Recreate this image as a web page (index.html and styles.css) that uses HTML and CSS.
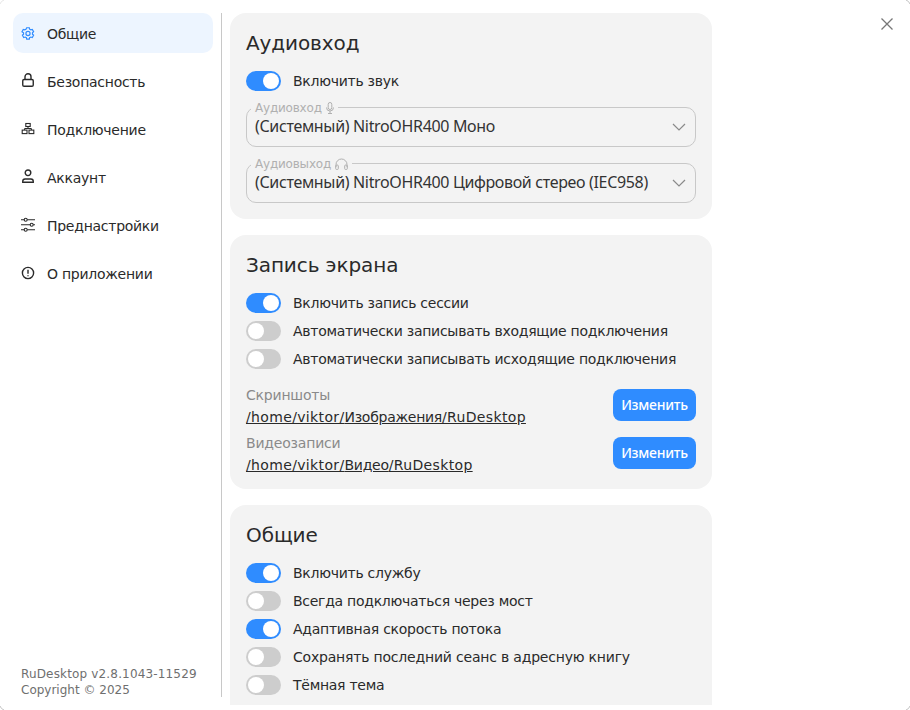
FILE: index.html
```html
<!DOCTYPE html>
<html lang="ru">
<head>
<meta charset="utf-8">
<title>RuDesktop</title>
<link rel="stylesheet" href="styles.css">
</head>
<body>
<div class="window">
  <aside class="sidebar">
    <nav class="nav">
      <a class="nav-item active">
        <svg class="nav-icon" viewBox="0 0 16 16"><g transform="translate(8 8.500) scale(.86) translate(-8 -8)"><path d="M6.500 1.300h3l.4 1.700 1.400.8 1.700-.5 1.500 2.600-1.300 1.200v1.700l1.300 1.200-1.500 2.600-1.700-.5-1.400.8-.4 1.700h-3l-.4-1.700-1.400-.8-1.700.5-1.500-2.600 1.300-1.200V7.100L1 5.900l1.500-2.600 1.700.5 1.400-.8z"/><circle cx="8" cy="8" r="2.400"/></g></svg>
        <span>Общие</span>
      </a>
      <a class="nav-item">
        <svg class="nav-icon" viewBox="0 0 16 16"><rect x="2.750" y="6.500" width="10.500" height="6.700" rx="1.300"/><path d="M5 6.500V3.750a3 3 0 0 1 6 0V6.500"/></svg>
        <span>Безопасность</span>
      </a>
      <a class="nav-item">
        <svg class="nav-icon thin" viewBox="0 0 16 16"><rect x="5.800" y="2.500" width="4.400" height="3"/><rect x="2.200" y="9.100" width="4.800" height="3.500"/><rect x="9" y="9.100" width="4.800" height="3.500"/><path d="M4.600 7.500h6.800M8 5.500v2M4.600 7.500v1.600M11.400 7.500v1.600"/></svg>
        <span>Подключение</span>
      </a>
      <a class="nav-item">
        <svg class="nav-icon" viewBox="0 0 16 16"><circle cx="8" cy="3.800" r="2.800"/><path d="M2.750 13.250v-1c0-1.300 1-2.300 2.300-2.300h5.900c1.300 0 2.300 1 2.300 2.300v1z"/></svg>
        <span>Аккаунт</span>
      </a>
      <a class="nav-item">
        <svg class="nav-icon thin" viewBox="0 0 16 16"><path d="M1 2.700h3.200M7.200 2.700H15M1 7.700h9.200M13.200 7.700H15M1 12.700h3.200M7.200 12.700H15"/><circle cx="5.700" cy="2.700" r="1.500"/><circle cx="11.700" cy="7.700" r="1.500"/><circle cx="5.700" cy="12.700" r="1.500"/></svg>
        <span>Преднастройки</span>
      </a>
      <a class="nav-item">
        <svg class="nav-icon" viewBox="0 0 16 16"><circle cx="8" cy="8" r="5.600"/><path d="M8 4.800v3.900M8 10.200v1"/></svg>
        <span>О приложении</span>
      </a>
    </nav>
    <div class="version">
      <div class="version-name">RuDesktop v2.8.1043-11529</div>
      <div>Copyright © 2025</div>
    </div>
  </aside>
  <main class="content">
    <section class="card">
      <h2 class="card-title">Аудиовход</h2>
      <div class="toggles">
        <label class="toggle-row"><span class="toggle on"></span><span>Включить звук</span></label>
      </div>
      <div class="field">
        <div class="legend"><span>Аудиовход</span>
          <svg class="legend-icon" viewBox="0 0 8 12"><rect x="2.200" y=".5" width="3.600" height="7" rx="1.800"/><path d="M.5 5.500a3.500 3.500 0 0 0 7 0M4 9v2.500M2 11.500h4"/></svg>
        </div>
        <div class="select-text">(Системный) NitroOHR400 Моно</div>
        <svg class="chevron" viewBox="0 0 14 8"><path d="M1 1l6 6 6-6"/></svg>
      </div>
      <div class="field">
        <div class="legend"><span>Аудиовыход</span>
          <svg class="legend-icon wide" viewBox="0 0 13 12"><path d="M1 9V6.500a5.500 5.500 0 0 1 11 0V9"/><rect x=".7" y="7" width="2.600" height="4.500" rx="1"/><rect x="9.700" y="7" width="2.600" height="4.500" rx="1"/></svg>
        </div>
        <div class="select-text">(Системный) NitroOHR400 Цифровой стерео (IEC958)</div>
        <svg class="chevron" viewBox="0 0 14 8"><path d="M1 1l6 6 6-6"/></svg>
      </div>
    </section>
    <section class="card paths-card">
      <h2 class="card-title">Запись экрана</h2>
      <div class="toggles">
        <label class="toggle-row"><span class="toggle on"></span><span>Включить запись сессии</span></label>
        <label class="toggle-row"><span class="toggle"></span><span>Автоматически записывать входящие подключения</span></label>
        <label class="toggle-row"><span class="toggle"></span><span>Автоматически записывать исходящие подключения</span></label>
      </div>
      <div class="paths">
        <div class="path-row">
          <div class="path-info"><div class="path-label">Скриншоты</div><a class="path-link">/home/viktor/<span class="cyr">Изображения</span>/RuDesktop</a></div>
          <button class="change-btn">Изменить</button>
        </div>
        <div class="path-row">
          <div class="path-info"><div class="path-label">Видеозаписи</div><a class="path-link">/home/viktor/<span class="cyr">Видео</span>/RuDesktop</a></div>
          <button class="change-btn">Изменить</button>
        </div>
      </div>
    </section>
    <section class="card last-card">
      <h2 class="card-title">Общие</h2>
      <div class="toggles">
        <label class="toggle-row"><span class="toggle on"></span><span>Включить службу</span></label>
        <label class="toggle-row"><span class="toggle"></span><span>Всегда подключаться через мост</span></label>
        <label class="toggle-row"><span class="toggle on"></span><span>Адаптивная скорость потока</span></label>
        <label class="toggle-row"><span class="toggle"></span><span class="wider">Сохранять последний сеанс в адресную книгу</span></label>
        <label class="toggle-row"><span class="toggle"></span><span>Тёмная тема</span></label>
      </div>
    </section>
  </main>
  <button class="close" aria-label="Закрыть">
    <svg viewBox="0 0 12 12"><path d="M.5.5l11 11M11.500.5l-11 11"/></svg>
  </button>
  <svg class="corner tl" viewBox="0 0 5 5"><path d="M0 4Q1 1 4 0"/></svg>
  <svg class="corner tr" viewBox="0 0 5 5"><path d="M1 0Q4 1 5 4"/></svg>
  <svg class="corner bl" viewBox="0 0 5 5"><path d="M0 1Q1 4 4 5"/></svg>
  <svg class="corner br" viewBox="0 0 5 5"><path d="M5 1Q4 4 1 5"/></svg>
</div>
</body>
</html>
```
FILE: styles.css
```css
* { box-sizing: border-box; }
html, body { margin: 0; height: 100%; overflow: hidden; background: #fff; }
body { font-family: "DejaVu Sans", sans-serif; font-size: 14px; color: #2a2a2a; }
.window { position: relative; display: flex; align-items: flex-start; width: 910px; height: 710px; background: #fff; overflow: hidden; }
.sidebar { width: 222px; height: 684px; flex: none; margin: 13px 0; padding-left: 13px; border-right: 1px solid #c8c8c8; display: flex; flex-direction: column; justify-content: space-between; }
.nav { display: flex; flex-direction: column; gap: 8px; width: 200px; }
.nav-item { height: 40px; display: flex; align-items: center; gap: 11px; padding-left: 7px; border-radius: 10px; color: #2a2a2a; letter-spacing: -.27px; }
.nav-item span { padding-top: 2px; }
.nav-item.active { background: #edf5ff; }
.nav-icon { width: 16px; height: 16px; fill: none; stroke: #2a2a2a; stroke-width: 1.400; flex: none; }
.nav-icon.thin { stroke-width: 1.100; }
.active .nav-icon { stroke: #2f8cff; }
.version { margin: 0 0 -1px 8px; font-size: 12px; line-height: 16px; color: #6f6f6f; }
.version-name { letter-spacing: .16px; }
.content { margin-left: 8px; padding-top: 13px; width: 482px; height: 705px; overflow: hidden; display: flex; flex-direction: column; gap: 16px; flex: none; }
.card { background: #f3f3f3; border-radius: 16px; padding: 16px; flex: none; }
.paths-card { padding-bottom: 12px; }
.last-card { padding-bottom: 40px; }
.card-title { margin: 0; font-size: 20px; font-weight: 400; line-height: 28px; letter-spacing: -.1px; }
.toggles { margin-top: 14px; display: flex; flex-direction: column; gap: 8px; letter-spacing: -.27px; }
.toggle-row { display: flex; align-items: center; gap: 12px; height: 20px; }
.wider { letter-spacing: -.2px; }
.toggle { position: relative; width: 35px; height: 20px; border-radius: 10px; background: #cdcdcd; flex: none; }
.toggle::after { content: ""; position: absolute; left: 2px; top: 2px; width: 16px; height: 16px; border-radius: 50%; background: #fff; }
.toggle.on { background: #2f8cff; }
.toggle.on::after { left: 17px; }
.field { position: relative; height: 40px; margin-top: 16px; border: 1px solid #c8c8c8; border-radius: 10px; padding: 0 8px 2px; display: flex; align-items: center; }
.legend { position: absolute; left: 4px; top: -8px; height: 16px; padding: 0 4px; display: flex; align-items: center; gap: 4px; background: #f3f3f3; font-size: 12px; letter-spacing: -.2px; color: #b0b0b0; }
.legend-icon { width: 8px; height: 12px; fill: none; stroke: #b0b0b0; stroke-width: 1; }
.legend-icon.wide { width: 13px; }
.select-text { font-family: "Noto Sans", sans-serif; font-size: 16px; letter-spacing: -.34px; color: #333; }
.chevron { position: absolute; right: 9px; top: 15px; width: 14px; height: 8px; fill: none; stroke: #8a8a8a; stroke-width: 1.200; }
.paths { margin-top: 16px; display: flex; flex-direction: column; gap: 4px; }
.path-row { display: flex; align-items: flex-start; justify-content: space-between; height: 44px; }
.path-label { color: #8a8a8a; line-height: 20px; letter-spacing: -.2px; }
.path-link { display: block; line-height: 24px; text-decoration: underline; color: #2a2a2a; letter-spacing: .35px; }
.cyr { letter-spacing: -.27px; }
.change-btn { width: 83px; height: 32px; margin-top: 4px; border: 0; padding: 0 0 2px; border-radius: 8px; background: #2f8cff; color: #fff; font-family: "Noto Sans", sans-serif; font-size: 14px; font-weight: 500; letter-spacing: -.25px; }
.close { position: absolute; left: 881px; top: 18px; width: 12px; height: 12px; padding: 0; border: 0; background: none; }
.close svg { display: block; width: 12px; height: 12px; fill: none; stroke: #777; stroke-width: 1.300; }
.corner { position: absolute; width: 5px; height: 5px; fill: none; stroke: #c4c4c4; stroke-width: 1; }
.corner.tl { left: 0; top: 0; stroke: #e6e6e6; }
.corner.tr { right: 0; top: 0; }
.corner.bl { left: 0; bottom: 0; }
.corner.br { right: 0; bottom: 0; }
```
